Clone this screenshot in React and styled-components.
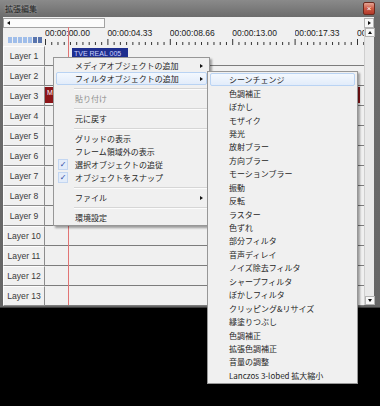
import React from 'react'
import styled, { createGlobalStyle } from 'styled-components'

const GlobalStyle = createGlobalStyle`
  html, body {
    margin: 0;
    padding: 0;
    background: #000;
  }
  body {
    width: 380px;
    height: 406px;
    overflow: hidden;
  }
`

const Screen = styled.div`
  position: relative;
  width: 380px;
  height: 406px;
  overflow: hidden;
  background: #000;
  font-family: 'Liberation Sans', 'Noto Sans CJK JP', sans-serif;
`

const Window = styled.div`
  width: 380px;
  height: 308px;
  box-sizing: border-box;
  display: flex;
  flex-direction: column;
  padding: 0 6px 2px 3px;
  background: linear-gradient(#8a8a8a, #6c6c6c 17px, #656565);
  border-bottom: 1px solid #3c3c3c;
`

const TitleBar = styled.div`
  height: 17px;
  display: flex;
  align-items: center;
  justify-content: space-between;
  flex-shrink: 0;
`

const Title = styled.span`
  padding-left: 2px;
  font-family: 'Noto Sans CJK JP', sans-serif;
  font-size: 8px;
  color: #1c1c1c;
  text-shadow: 0 0 3px rgba(255, 255, 255, 0.45);
`

const CloseButton = styled.div`
  width: 12px;
  height: 13px;
  box-sizing: border-box;
  margin-right: -1px;
  border: 1px solid #6c2a1e;
  border-radius: 2px;
  background: linear-gradient(#e6a595, #cc5a44 50%, #b3392a);
  color: #fff;
  font-size: 8px;
  line-height: 11px;
  text-align: center;
`

const Client = styled.div`
  flex: 1;
  display: flex;
  flex-direction: column;
  padding-top: 1px;
  background: #f0f0f0;
  min-height: 0;
`

const TopStrip = styled.div`
  height: 10px;
  display: flex;
  justify-content: space-between;
  flex-shrink: 0;
`

const HScroll = styled.div`
  width: 102px;
  height: 10px;
  box-sizing: border-box;
  border: 1px solid #a2a2a2;
  background: #fbfbfb;
  display: flex;
  align-items: center;
  padding-left: 3px;
`

const Tri = styled.span`
  display: inline-block;
  width: 0;
  height: 0;
  border-style: solid;
  border-color: transparent;
  ${({ $dir }) =>
    $dir === 'left'
      ? 'border-width: 2.5px 3px 2.5px 0; border-right-color: #111;'
      : $dir === 'right'
        ? 'border-width: 2.5px 0 2.5px 3px; border-left-color: #111;'
        : $dir === 'up'
          ? 'border-width: 0 2.5px 3px 2.5px; border-bottom-color: #111;'
          : 'border-width: 3px 2.5px 0 2.5px; border-top-color: #111;'}
`

const SmallButton = styled.div`
  width: 10px;
  height: ${({ $h }) => $h || 10}px;
  box-sizing: border-box;
  border: 1px solid #b4b4b4;
  background: #f7f7f7;
  display: flex;
  align-items: center;
  justify-content: center;
`

const Main = styled.div`
  flex: 1;
  display: flex;
  min-height: 0;
`

const Timeline = styled.div`
  flex: 1;
  min-width: 0;
  display: flex;
  flex-direction: column;
  position: relative;
`

const Cursor = styled.div`
  position: absolute;
  top: -1px;
  bottom: 0;
  left: 65px;
  width: 1px;
  background: #e27474;
  z-index: 2;
`

const VScroll = styled.div`
  width: 10px;
  display: flex;
  flex-direction: column;
  justify-content: space-between;
  background: #e9e9e9;
  border-left: 1px solid #cfcfcf;
  box-sizing: border-box;
`

const HeaderRow = styled.div`
  height: 18px;
  display: flex;
  flex-shrink: 0;
`

const ZoomCell = styled.div`
  width: 42px;
  box-sizing: border-box;
  display: flex;
  align-items: flex-end;
  padding: 0 0 3px 5px;
`

const ZoomBar = styled.div`
  display: flex;
  gap: 1px;
`

const ZoomSeg = styled.div`
  width: 4px;
  height: 6px;
  background: ${({ $dark }) => ($dark ? '#5874ad' : '#9fbde9')};
`

const Ruler = styled.div`
  flex: 1;
  min-width: 0;
  display: flex;
  flex-direction: column;
  justify-content: space-between;
  overflow: hidden;
`

const Labels = styled.div`
  display: flex;
  white-space: nowrap;
`

const TimeLabel = styled.span`
  flex: ${({ $last }) => ($last ? '1 1 0' : '0 0 62.4px')};
  min-width: 0;
  overflow: hidden;
  font-size: 8.5px;
  line-height: 11px;
  color: #222;
`

const LayerRow = styled.div`
  height: 20px;
  display: flex;
  flex-shrink: 0;
`

const LayerButton = styled.div`
  width: 42px;
  box-sizing: border-box;
  display: flex;
  align-items: center;
  justify-content: center;
  background: #f0f0f0;
  border-top: 1px solid #fdfdfd;
  border-left: 1px solid #fdfdfd;
  border-right: 1px solid #8d8d8d;
  border-bottom: 1px solid #8d8d8d;
  font-size: 8.6px;
  color: #3a3a3a;
  white-space: pre;
`

const Track = styled.div`
  flex: 1;
  position: relative;
  box-sizing: border-box;
  border-bottom: 1px solid #7c7c7c;
  background: #f0f0f0;
`

const Clip = styled.div`
  position: absolute;
  left: ${({ $left }) => $left}px;
  width: ${({ $width }) => $width}px;
  top: ${({ $top }) => $top}px;
  height: ${({ $height }) => $height}px;
  background: ${({ $color }) => $color};
  color: ${({ $text }) => $text};
  font-size: 7px;
  line-height: 12px;
  padding-left: 2px;
  box-sizing: border-box;
  overflow: hidden;
  white-space: nowrap;
`

const Menu = styled.div`
  position: absolute;
  left: ${({ $left }) => $left}px;
  top: ${({ $top }) => $top}px;
  width: ${({ $width }) => $width}px;
  box-sizing: border-box;
  padding: 1px 0;
  background: #f0f0f0;
  border: 1px solid #979797;
  box-shadow: 2px 2px 2px rgba(0, 0, 0, 0.35);
  font-family: 'Noto Sans CJK JP', sans-serif;
  z-index: ${({ $z }) => $z};
`

const MenuItem = styled.div`
  height: ${({ $h }) => $h}px;
  margin: 0 2px;
  box-sizing: border-box;
  display: grid;
  grid-template-columns: 18px 1fr 10px;
  align-items: center;
  font-size: 8px;
  color: ${({ $disabled }) => ($disabled ? '#8e8e8e' : '#262626')};
  white-space: nowrap;
  border: 1px solid ${({ $active }) => ($active ? '#b9d3f3' : 'transparent')};
  border-radius: 2px;
  background: ${({ $active }) =>
    $active ? 'linear-gradient(#f3f8fe, #e2ecfa)' : 'transparent'};
`

const Cell = styled.span`
  display: flex;
  align-items: center;
  justify-content: ${({ $center }) => ($center ? 'center' : 'flex-start')};
`

const Check = styled.span`
  width: 10px;
  height: 11px;
  margin-left: 1px;
  box-sizing: border-box;
  border: 1px solid #c3d6f1;
  background: #e3ecf9;
  color: #2a4ba4;
  font-family: 'DejaVu Sans', sans-serif;
  font-size: 8px;
  line-height: 9px;
  text-align: center;
`

const Separator = styled.div`
  height: 1px;
  margin: 3px 2px 2px 20px;
  background: #d6d6d6;
  border-bottom: 1px solid #fcfcfc;
`

const times = ['00:00:00.00', '00:00:04.33', '00:00:08.66', '00:00:13.00', '00:00:17.33', '00']

const mainMenu = [
  { label: 'メディアオブジェクトの追加', sub: true },
  { label: 'フィルタオブジェクトの追加', sub: true, active: true },
  { sep: true },
  { label: '貼り付け', disabled: true },
  { sep: true },
  { label: '元に戻す' },
  { sep: true },
  { label: 'グリッドの表示' },
  { label: 'フレーム領域外の表示' },
  { label: '選択オブジェクトの追従', checked: true },
  { label: 'オブジェクトをスナップ', checked: true },
  { sep: true },
  { label: 'ファイル', sub: true },
  { sep: true },
  { label: '環境設定' },
]

const filterMenu = [
  'シーンチェンジ', '色調補正', 'ぼかし', 'モザイク', '発光', '放射ブラー',
  '方向ブラー', 'モーションブラー', '振動', '反転', 'ラスター', '色ずれ',
  '部分フィルタ', '音声ディレイ', 'ノイズ除去フィルタ', 'シャープフィルタ',
  'ぼかしフィルタ', 'クリッピング&リサイズ', '縁塗りつぶし', '色調補正',
  '拡張色調補正', '音量の調整', 'Lanczos 3-lobed 拡大縮小',
]

const RulerTicks = () => {
  const ticks = []
  for (let i = 0; i < 52; i++) {
    const x = i * 6.24 + 0.5
    ticks.push(<line key={i} x1={x} x2={x} y1={i % 10 === 0 ? 0 : 3} y2={6} stroke="#333" strokeWidth="1" />)
  }
  return (
    <svg width="319" height="7" style={{ display: 'block' }}>
      {ticks}
    </svg>
  )
}

const App = () => {
  const layers = Array.from({ length: 13 }, (_, i) => i + 1)

  return (
    <Screen>
      <GlobalStyle />
      <Window>
        <TitleBar>
          <Title>拡張編集</Title>
          <CloseButton>×</CloseButton>
        </TitleBar>
        <Client>
          <TopStrip>
            <HScroll>
              <Tri $dir="left" />
            </HScroll>
            <SmallButton>
              <Tri $dir="right" />
            </SmallButton>
          </TopStrip>
          <Main>
            <Timeline>
              <Cursor />
              <HeaderRow>
                <ZoomCell>
                  <ZoomBar>
                    {[0, 1, 2, 3, 4, 5, 6].map((i) => (
                      <ZoomSeg key={i} $dark={i >= 5} />
                    ))}
                  </ZoomBar>
                </ZoomCell>
                <Ruler>
                  <Labels>
                    {times.map((t, i) => (
                      <TimeLabel key={t} $last={i === times.length - 1}>
                        {t}
                      </TimeLabel>
                    ))}
                  </Labels>
                  <RulerTicks />
                </Ruler>
              </HeaderRow>
              {layers.map((n) => (
                <LayerRow key={n}>
                  <LayerButton>{`Layer ${n}`}</LayerButton>
                  <Track>
                    {n === 1 && (
                      <Clip $left={27} $width={56} $top={2} $height={15} $color="#1f2f8f" $text="#c9d2ff">
                        TVE REAL 005
                      </Clip>
                    )}
                    {n === 3 && (
                      <Clip $left={0} $width={315} $top={1} $height={16} $color="#8c1518" $text="#fff">
                        M
                      </Clip>
                    )}
                  </Track>
                </LayerRow>
              ))}
            </Timeline>
            <VScroll>
              <SmallButton $h={9}>
                <Tri $dir="up" />
              </SmallButton>
              <SmallButton $h={9}>
                <Tri $dir="down" />
              </SmallButton>
            </VScroll>
          </Main>
        </Client>
      </Window>

      <Menu $left={53} $top={57} $width={157} $z={5}>
        {mainMenu.map((item, i) =>
          item.sep ? (
            <Separator key={i} />
          ) : (
            <MenuItem key={i} $h={13} $active={item.active} $disabled={item.disabled}>
              <Cell>{item.checked && <Check>✓</Check>}</Cell>
              <span>{item.label}</span>
              <Cell $center>{item.sub && <Tri $dir="right" />}</Cell>
            </MenuItem>
          ),
        )}
      </Menu>

      <Menu $left={207} $top={71} $width={151} $z={6}>
        {filterMenu.map((label, i) => (
          <MenuItem key={i} $h={13.45} $active={i === 0}>
            <span />
            <span>{label}</span>
            <span />
          </MenuItem>
        ))}
      </Menu>
    </Screen>
  )
}

export default App
